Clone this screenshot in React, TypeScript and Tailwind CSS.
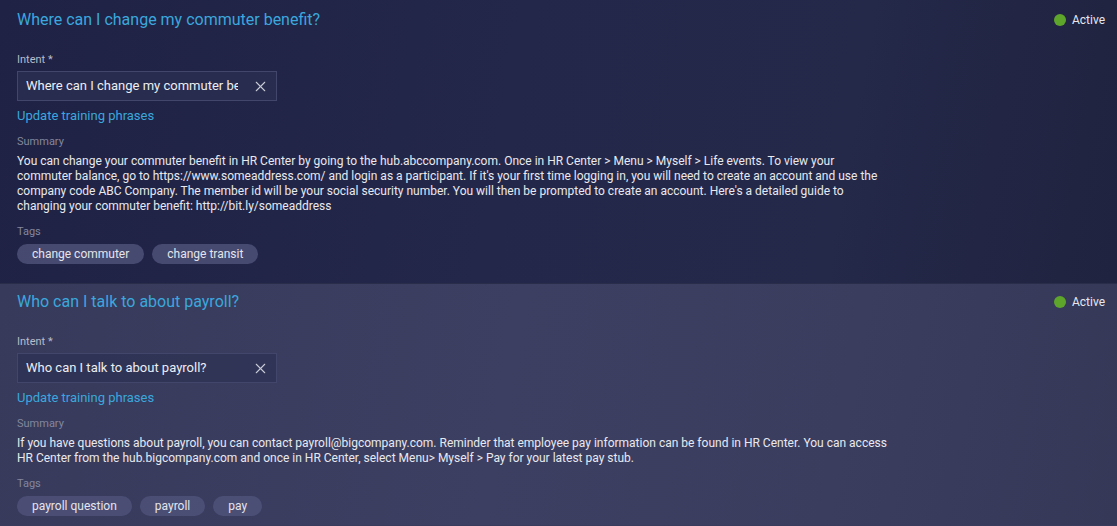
import { X } from "lucide-react";

type Item = {
  title: string;
  intent: string;
  summary: string;
  tags: string[];
};

const items: Item[] = [
  {
    title: "Where can I change my commuter benefit?",
    intent: "Where can I change my commuter benefit?",
    summary:
      "You can change your commuter benefit in HR Center by going to the hub.abccompany.com. Once in HR Center > Menu > Myself > Life events. To view your commuter balance, go to https://www.someaddress.com/ and login as a participant. If it's your first time logging in, you will need to create an account and use the company code ABC Company. The member id will be your social security number. You will then be prompted to create an account. Here's a detailed guide to changing your commuter benefit: http://bit.ly/someaddress",
    tags: ["change commuter", "change transit"],
  },
  {
    title: "Who can I talk to about payroll?",
    intent: "Who can I talk to about payroll?",
    summary:
      "If you have questions about payroll, you can contact payroll@bigcompany.com. Reminder that employee pay information can be found in HR Center. You can access HR Center from the hub.bigcompany.com and once in HR Center, select Menu> Myself > Pay for your latest pay stub.",
    tags: ["payroll question", "payroll", "pay"],
  },
];

function Card({ item, top }: { item: Item; top: boolean }) {
  return (
    <div
      className={
        top
          ? "relative pl-[17px] pr-3 pt-[10px] pb-[19px] bg-[linear-gradient(100deg,#1f2244_0%,#232749_45%,#242849_75%,#20233f_100%)]"
          : "relative pl-[17px] pr-3 pt-[8px] pb-[9px] bg-[linear-gradient(100deg,#373a5b_0%,#3c3f61_45%,#3a3d5e_75%,#353857_100%)]"
      }
    >
      <div className="absolute right-3 flex items-center gap-[6px]" style={{ top: top ? 13 : 11 }}>
        <span className="w-3 h-3 rounded-full bg-[#5ea52c]" />
        <span className="text-[12px] leading-[14px] text-[#e6e7ee]">Active</span>
      </div>
      <h2 className="text-[16px] leading-[20px] text-[#3ba7dd]">{item.title}</h2>
      <div className="mt-[23px] text-[11px] leading-[14px] text-[#b9bbc9]">Intent *</div>
      <div className="mt-[4px] w-[260px] h-[30px] flex items-center border border-[#42466a] bg-[#2c3052]/70 pl-[8px] pr-[7px]">
        <span className="w-[212px] overflow-hidden whitespace-nowrap text-[13px] text-[#eceef4]">
          {item.intent}
        </span>
        <X size={17} strokeWidth={1.5} className="text-[#c9cbd6] ml-auto" />
      </div>
      <div className="mt-[7px] text-[13px] leading-[16px] text-[#3ba7dd]">Update training phrases</div>
      <div className="mt-[11px] text-[11px] leading-[14px] text-[#83879e]">Summary</div>
      <p className="mt-[5px] w-[872px] text-[12px] leading-[15px] text-[#e8e9ef]">{item.summary}</p>
      <div className="mt-[11px] text-[11px] leading-[14px] text-[#83879e]">Tags</div>
      <div className="mt-[5px] flex gap-2">
        {item.tags.map((t) => (
          <span
            key={t}
            className="h-5 px-[15px] rounded-full bg-[#50537a]/80 text-[12px] leading-5 text-[#e4e5ec]"
          >
            {t}
          </span>
        ))}
      </div>
    </div>
  );
}

export default function App() {
  return (
    <div className="w-[1117px] h-[526px] overflow-hidden bg-[#383b5c] font-['Roboto',sans-serif]">
      <Card item={items[0]} top />
      <div className="h-px bg-[#2a2d4a]" />
      <Card item={items[1]} top={false} />
    </div>
  );
}
